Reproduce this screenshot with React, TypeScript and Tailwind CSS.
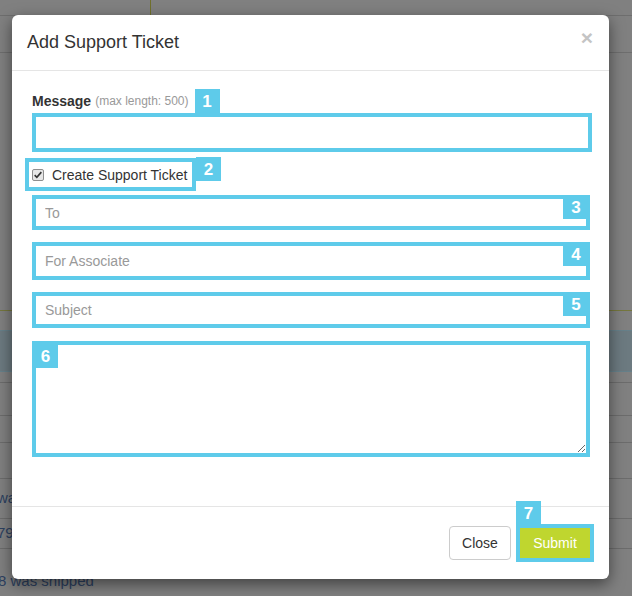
import React from 'react';

const CYAN = 'bg-[#5ecbea]';

function Badge({ n, className = '' }: { n: string; className?: string }) {
  return (
    <span
      className={`${CYAN} flex h-[24px] w-[25px] items-center justify-center text-[17px] font-bold leading-none text-white ${className}`}
    >
      {n}
    </span>
  );
}

function Field({ placeholder, n, h, mt }: { placeholder: string; n: string; h: string; mt: string }) {
  return (
    <div className={`relative w-[558px] border-4 border-[#5ecbea] ${h} ${mt}`}>
      <input
        className="h-full w-full bg-white px-[9px] text-[14px] text-[#555] outline-none placeholder:text-[#999]"
        placeholder={placeholder}
      />
      <Badge n={n} className="absolute -right-[3px] -top-1 w-[26px]" />
    </div>
  );
}

export default function App() {
  return (
    <div className="relative h-[596px] w-[632px] overflow-hidden bg-[#808080] font-['Liberation_Sans',Arial,sans-serif]">
      {/* page behind the overlay */}
      <div className="flex flex-col">
        <div className="flex h-[15px]">
          <div className="w-[150px]" />
          <div className="h-full w-px bg-[#70702c]" />
        </div>
        <div className="h-[37px] border-t border-[#6e6e6e]" />
        <div className="h-[258px] border-t border-[#6e6e6e]" />
        <div className="h-[20px] border-t border-[#75773e]" />
        <div className="h-[42px] border-y border-[#66808a] bg-[#6c7a80]" />
        <div className="h-[10px]" />
        <div className="h-[33px] border-t border-[#6c6c6c]" />
        <div className="h-[27px] border-t border-[#6c6c6c]" />
        <div className="h-[36px] border-t border-[#6c6c6c]" />
        <div className="flex h-[40px] items-center border-t border-[#6c6c6c] text-[15px] text-[#2d4160]">
          <span className="-ml-[3px]">wa</span>
        </div>
        <div className="flex h-[30px] items-center border-t border-[#6c6c6c] text-[15px] text-[#2d4160]">
          <span className="-ml-[3px]">79</span>
        </div>
        <div className="flex h-[70px] items-start border-t border-[#6c6c6c] pt-[23px] text-[15px] leading-[18px] text-[#2d4160]">
          <span className="-ml-[2px]">8 was shipped</span>
        </div>
      </div>

      {/* modal */}
      <div className="absolute left-[12px] top-[15px] flex h-[564px] w-[597px] flex-col rounded-md bg-white shadow-[0_5px_15px_rgba(0,0,0,0.5)]">
        <div className="flex h-[56px] items-center justify-between border-b border-[#e5e5e5] pl-[15px] pr-[16px]">
          <h4 className="text-[18px] text-[#333]">Add Support Ticket</h4>
          <span className="-mt-[10px] text-[21px] font-bold leading-none text-[#c4c4c4]">×</span>
        </div>

        <div className="flex flex-1 flex-col pl-5 pr-[17px] pt-[20px]">
          <div className="mb-[2px] flex h-[20px] items-center">
            <span className="text-[14px] font-bold text-[#333]">Message</span>
            <span className="ml-[4px] text-[12px] text-[#999]">(max length: 500)</span>
            <Badge n="1" className="ml-[6px]" />
          </div>
          <div className="h-[39px] w-[560px] border-4 border-[#5ecbea]">
            <input className="h-full w-full bg-white px-[9px] text-[14px] outline-none" />
          </div>

          <div className="-ml-[7px] mt-[6px] flex items-start">
            <label className="flex h-[33px] w-[171px] items-center border-4 border-[#5ecbea] pl-[3px] pt-px">
              <span className="flex h-[12px] w-[12px] items-center justify-center rounded-[2px] border border-[#8f8f8f] bg-[#e6e6e6]">
                <svg viewBox="0 0 12 12" className="h-[10px] w-[10px]">
                  <path d="M2 6.2 L4.6 8.8 L10 2.6" fill="none" stroke="#333" strokeWidth="2" />
                </svg>
              </span>
              <span className="ml-[8px] text-[14px] text-[#333]">Create Support Ticket</span>
            </label>
            <Badge n="2" className="-mt-px" />
          </div>

          <Field placeholder="To" n="3" h="h-[35px]" mt="mt-[4px]" />
          <Field placeholder="For Associate" n="4" h="h-[38px]" mt="mt-[12px]" />
          <Field placeholder="Subject" n="5" h="h-[36px]" mt="mt-[12px]" />

          <div className="relative mt-[13px] h-[116px] w-[558px] border-4 border-[#5ecbea]">
            <textarea className="block h-full w-full bg-white px-[9px] py-[6px] text-[14px] outline-none" />
            <Badge n="6" className="absolute -left-[3px] -top-px" />
          </div>
        </div>

        <div className="flex h-[73px] items-center justify-end gap-[5px] border-t border-[#e5e5e5] pr-[15px]">
          <button className="h-[34px] w-[62px] rounded border border-[#ccc] bg-white text-[14px] text-[#333]">
            Close
          </button>
          <div className="relative h-[38px] w-[78px] border-4 border-[#5ecbea]">
            <button className="h-full w-full bg-[#bfd62f] text-[14px] text-white">Submit</button>
            <Badge n="7" className="absolute -left-1 -top-[27px] h-[23px]" />
          </div>
        </div>
      </div>
    </div>
  );
}
